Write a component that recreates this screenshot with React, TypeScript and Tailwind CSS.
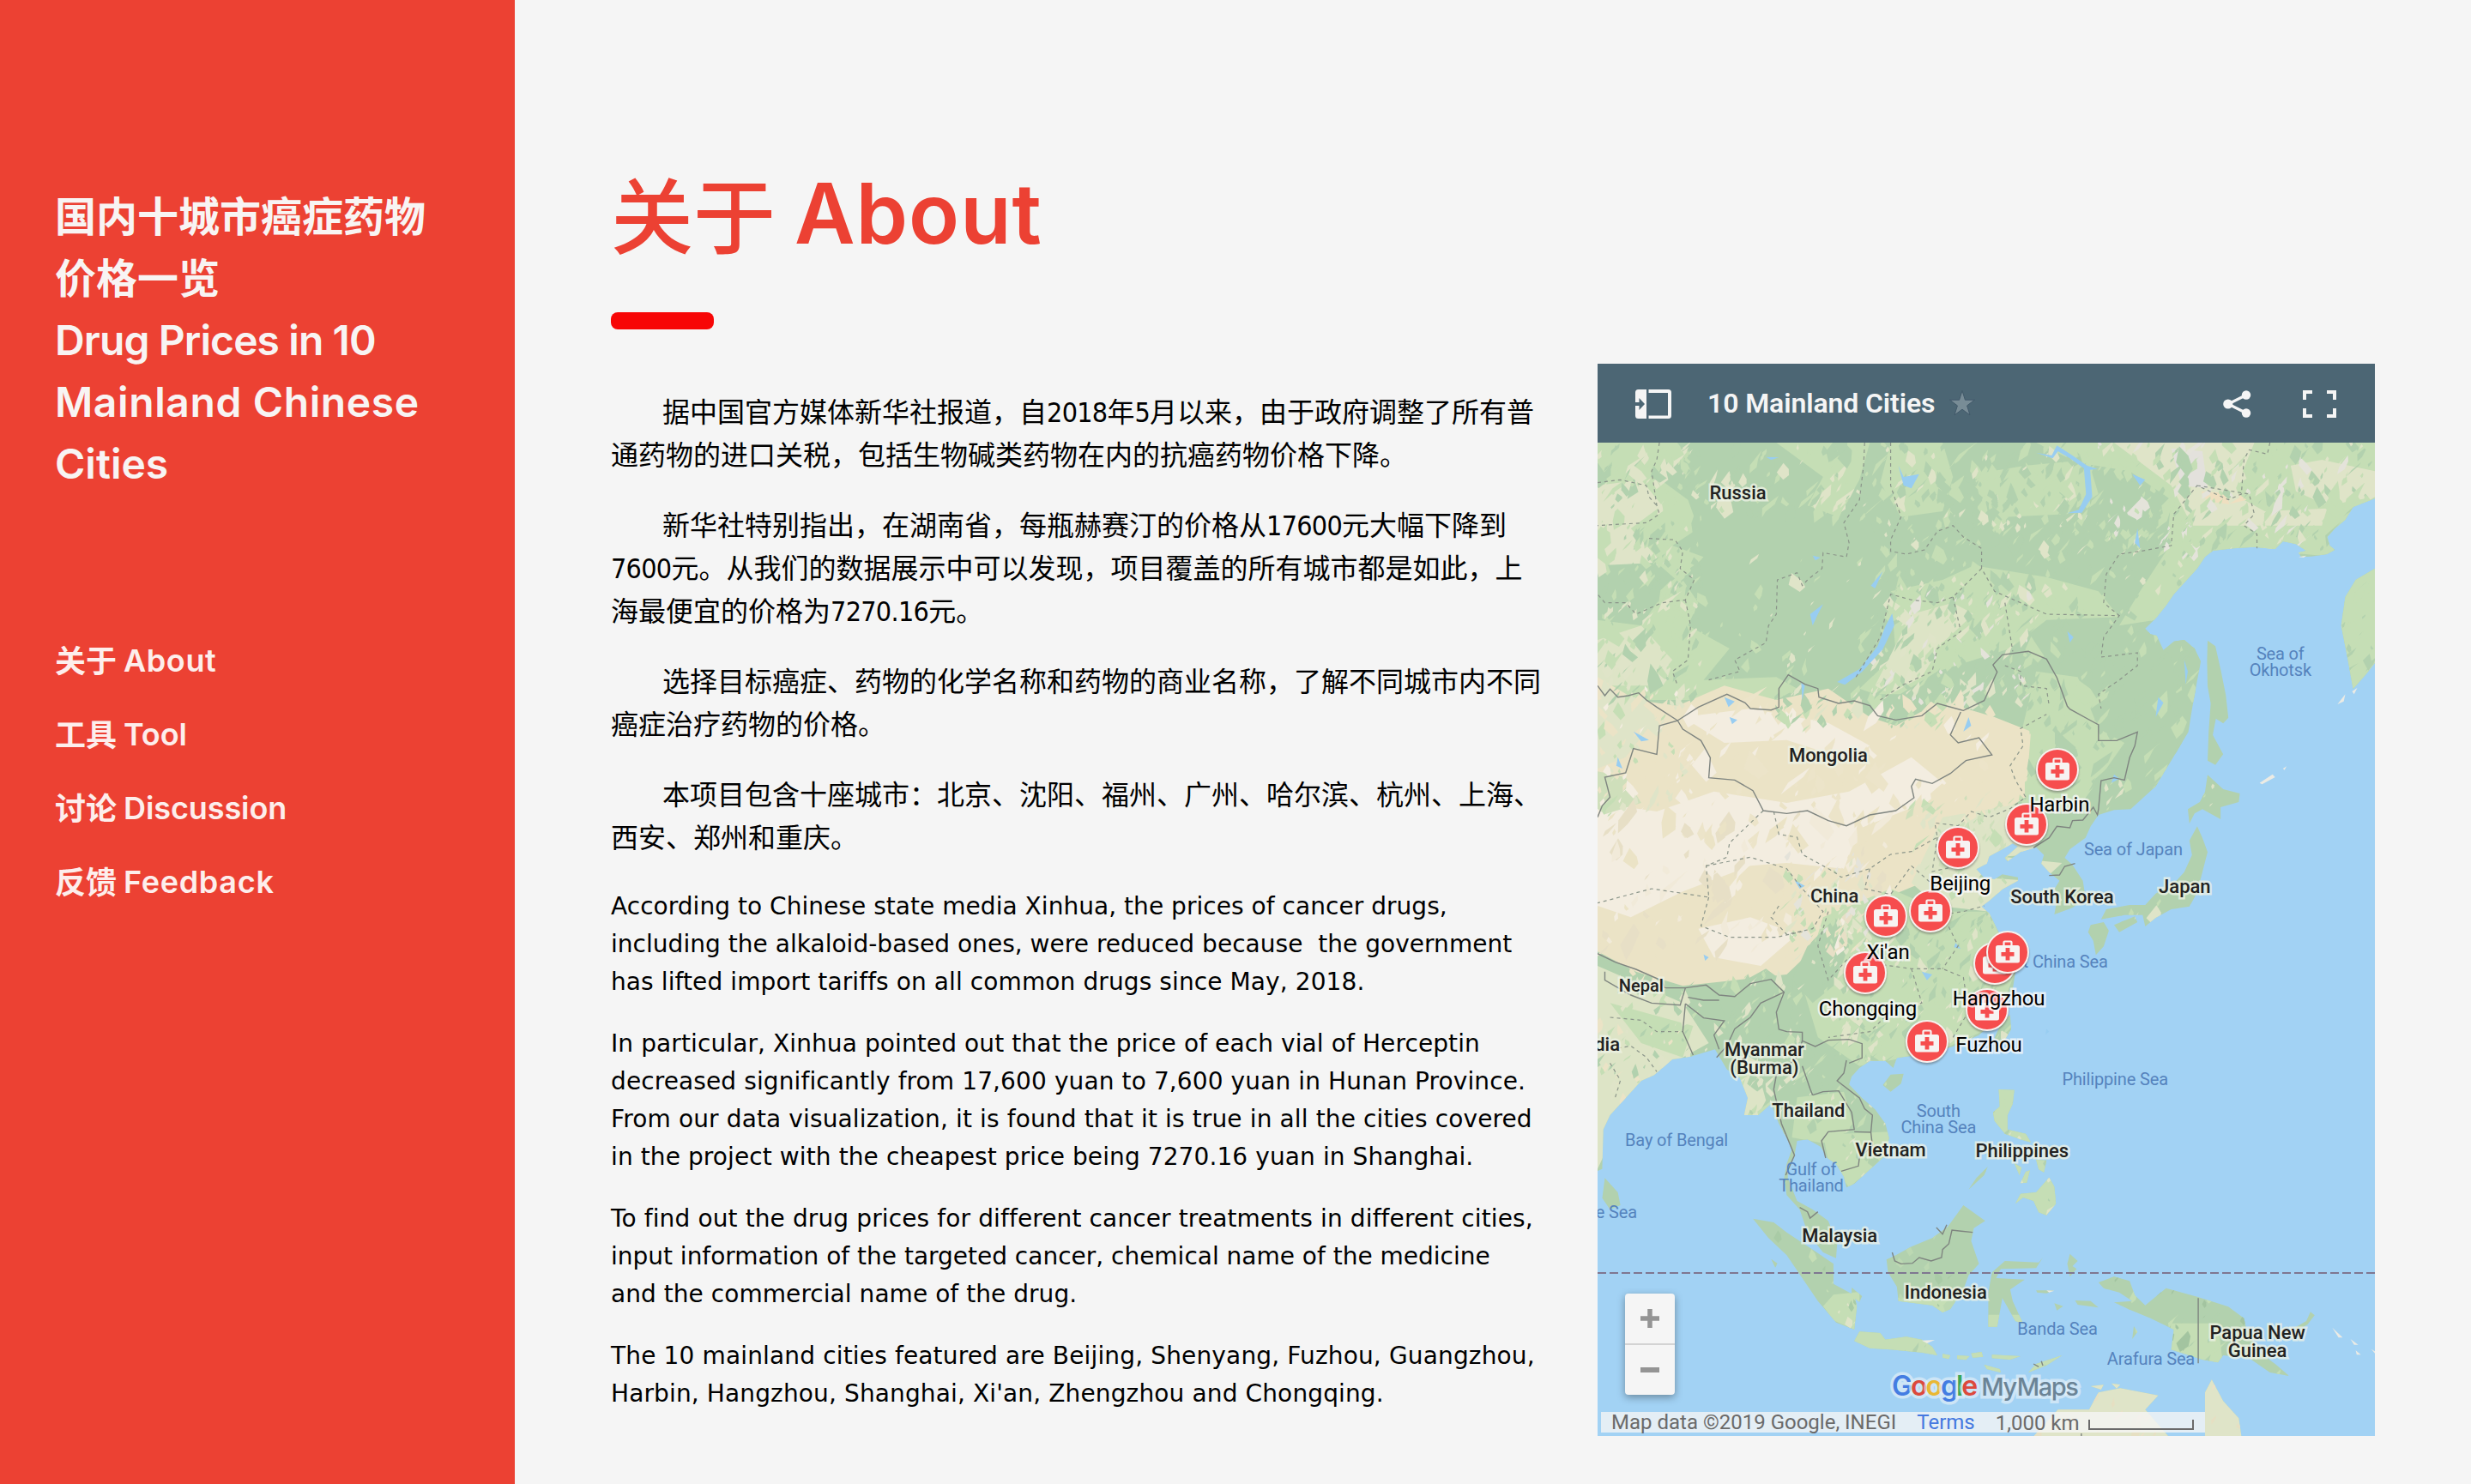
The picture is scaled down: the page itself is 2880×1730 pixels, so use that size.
import React from 'react';

/* ------------------------------------------------------------------ */
/* Sidebar                                                             */
/* ------------------------------------------------------------------ */

const NAV: { zh: string; en: string; tracking: string }[] = [
  { zh: '关于', en: 'About', tracking: 'tracking-[0.6px]' },
  { zh: '工具', en: 'Tool', tracking: 'tracking-[-0.1px]' },
  { zh: '讨论', en: 'Discussion', tracking: 'tracking-[-0.1px]' },
  { zh: '反馈', en: 'Feedback', tracking: 'tracking-[0.7px]' },
];

function Sidebar() {
  return (
    <aside className="flex h-[1730px] w-[600px] shrink-0 flex-col bg-[#ec4133] pl-16 pt-[213px] font-['Inter','Noto_Sans_CJK_SC',sans-serif] font-semibold text-[#f8f4f3]">
      <h1 className="flex flex-col whitespace-nowrap text-[48px] leading-[72px]">
        <span className="font-['Noto_Sans_CJK_SC',sans-serif] font-bold">国内十城市癌症药物</span>
        <span className="mb-1 font-['Noto_Sans_CJK_SC',sans-serif] font-bold">价格一览</span>
        <span className="tracking-[-0.9px]">Drug Prices in 10</span>
        <span className="tracking-[0.6px]">Mainland Chinese</span>
        <span className="tracking-[0px]">Cities</span>
      </h1>
      <nav className="mt-[150px] flex flex-col text-[36px] leading-[86px] text-[#fdeeec]">
        {NAV.map((n) => (
          <a key={n.en} className="flex h-[86px] gap-[8px] whitespace-nowrap">
            <span className="font-['Noto_Sans_CJK_SC',sans-serif] font-bold leading-[82px]">{n.zh}</span>
            <span className={n.tracking}>{n.en}</span>
          </a>
        ))}
      </nav>
    </aside>
  );
}

/* ------------------------------------------------------------------ */
/* Article                                                             */
/* ------------------------------------------------------------------ */

const ZH: string[][] = [
  ['据中国官方媒体新华社报道，自2018年5月以来，由于政府调整了所有普', '通药物的进口关税，包括生物碱类药物在内的抗癌药物价格下降。'],
  ['新华社特别指出，在湖南省，每瓶赫赛汀的价格从17600元大幅下降到', '7600元。从我们的数据展示中可以发现，项目覆盖的所有城市都是如此，上', '海最便宜的价格为7270.16元。'],
  ['选择目标癌症、药物的化学名称和药物的商业名称，了解不同城市内不同', '癌症治疗药物的价格。'],
  ['本项目包含十座城市：北京、沈阳、福州、广州、哈尔滨、杭州、上海、', '西安、郑州和重庆。'],
];

const EN: [string, string][][] = [
  [
    ['According to Chinese state media Xinhua, the prices of cancer drugs,', 'tracking-[0.04px]'],
    ['including the alkaloid-based ones, were reduced because \u00a0the government', 'tracking-[0.03px]'],
    ['has lifted import tariffs on all common drugs since May, 2018.', 'tracking-[0.1px]'],
  ],
  [
    ['In particular, Xinhua pointed out that the price of each vial of Herceptin', 'tracking-[0.1px]'],
    ['decreased significantly from 17,600 yuan to 7,600 yuan in Hunan Province.', 'tracking-[0.11px]'],
    ['From our data visualization, it is found that it is true in all the cities covered', 'tracking-[0.13px]'],
    ['in the project with the cheapest price being 7270.16 yuan in Shanghai.', 'tracking-[0.1px]'],
  ],
  [
    ['To find out the drug prices for different cancer treatments in different cities,', 'tracking-[0.12px]'],
    ['input information of the targeted cancer, chemical name of the medicine', 'tracking-[-0.01px]'],
    ['and the commercial name of the drug.', 'tracking-[0.05px]'],
  ],
  [
    ['The 10 mainland cities featured are Beijing, Shenyang, Fuzhou, Guangzhou,', 'tracking-[0.15px]'],
    ["Harbin, Hangzhou, Shanghai, Xi'an, Zhengzhou and Chongqing.", 'tracking-[0.13px]'],
  ],
];

function ZhLine({ text }: { text: string }) {
  return (
    <span className="block h-[50px]">
      {text.split(/([0-9.]+)/).map((part, i) =>
        /^[0-9.]+$/.test(part) ? (
          <span key={i} className="font-['DejaVu_Sans_Condensed','DejaVu_Sans',sans-serif] tracking-[-0.7px]">
            {part}
          </span>
        ) : (
          <span key={i}>{part}</span>
        ),
      )}
    </span>
  );
}

function Article() {
  return (
    <article className="flex w-[1150px] flex-col gap-8 whitespace-nowrap pt-[29px] text-black">
      {ZH.map((p, i) => (
        <p key={i} className="indent-[60px] font-['Noto_Sans_CJK_SC',sans-serif] text-[32px] leading-[50px]">
          {p.map((l, j) => (
            <span key={l} className={j === 0 ? 'block' : 'block indent-0'}>
              <ZhLine text={l} />
            </span>
          ))}
        </p>
      ))}
      <div className="mt-1 flex flex-col gap-7 font-['DejaVu_Sans',sans-serif] text-[28px] leading-[44px]">
        {EN.map((p, i) => (
          <p key={i}>
            {p.map(([l, tracking]) => (
              <span key={l} className={`block ${tracking}`}>
                {l}
              </span>
            ))}
          </p>
        ))}
      </div>
    </article>
  );
}

/* ------------------------------------------------------------------ */
/* Map. The drawing grid runs x 36..1532 and y 0..3474 and is stretched */
/* over the 906 x 1158 canvas.                                         */
/* ------------------------------------------------------------------ */

const LAND: string[] = [
  'M36 0H1532V195L1490 225 1475 270 1455 300 1440 330 1445 360 1455 375 1440 390 1410 398 1390 400 1385 385 1400 378 1380 355 1355 345 1340 372 1300 365 1260 370 1220 378 1205 400 1190 440 1165 490 1145 530 1130 570 1110 615 1090 650 1100 670 1112 675 1125 725 1145 695 1165 690 1185 720 1197 765 1190 832 1180 932 1173 1012 1140 1112 1110 1202 1062 1282 1030 1285 1000 1302 985 1342 975 1382 945 1422 935 1452 950 1477 970 1532 975 1592 950 1627 915 1650 920 1602 915 1562 925 1532 905 1502 890 1472 895 1442 880 1415 850 1432 825 1465 820 1452 845 1412 835 1402 810 1427 790 1447 785 1472 765 1492 780 1522 800 1527 815 1510 845 1520 845 1532 815 1562 790 1602 775 1622 790 1647 808 1712 830 1772 820 1822 840 1852 835 1912 820 1972 800 2022 770 2072 720 2112 690 2127 650 2142 612 2152 605 2187 590 2162 560 2162 540 2187 525 2217 520 2245 545 2292 570 2332 590 2382 597 2432 590 2492 560 2542 530 2592 515 2605 510 2567 495 2522 478 2502 465 2462 440 2437 420 2442 415 2492 402 2532 402 2572 420 2652 450 2682 480 2722 497 2802 495 2852 470 2832 440 2762 425 2682 400 2632 395 2572 400 2522 410 2472 400 2432 385 2382 370 2312 345 2352 318 2352 325 2292 310 2222 285 2192 262 2122 215 2147 180 2157 145 2212 120 2232 90 2292 60 2352 47 2402 45 2540 36 2547Z',
  'M1210 692L1225 712 1235 792 1245 882 1250 962 1240 982 1226 965 1220 1022 1240 1090 1225 1127 1210 1112 1212 1012 1216 912 1210 852 1209 762Z',
  'M1532 440L1495 480 1475 540 1467 640 1480 760 1490 862 1515 810 1532 770Z',
  'M1210 1162L1240 1212 1272 1227 1270 1257 1235 1275 1235 1317 1200 1282 1185 1297 1175 1332 1172 1282 1195 1257 1205 1222Z',
  'M1190 1342L1200 1382 1210 1432 1200 1502 1190 1572 1175 1622 1140 1632 1110 1662 1090 1692 1085 1652 1050 1652 1005 1667 1015 1632 1060 1617 1090 1617 1110 1577 1150 1532 1165 1502 1180 1442 1175 1392Z',
  'M985 1687L1010 1677 1020 1707 1010 1762 995 1792 990 1742 980 1712Z',
  'M1030 1687L1070 1657 1075 1677 1040 1712Z',
  'M830 2002L832 2052 812 2112 800 2082 815 2022Z',
  'M600 2210L625 2207 620 2242 600 2270 585 2247Z',
  'M50 2572L75 2622 80 2667 60 2682 45 2642Z',
  'M808 2262L838 2264 835 2312 825 2352 825 2402 860 2417 870 2447 850 2437 820 2417 800 2372 797 2342 810 2322Z',
  'M905 2570L915 2602 918 2662 900 2702 885 2692 875 2652 855 2640 840 2662 850 2627 880 2622Z',
  'M838 2520L852 2535 848 2562ZM860 2550L868 2545 862 2588 850 2590ZM880 2508L900 2510 895 2552 885 2542Z',
  'M787 2532L780 2562 750 2612 765 2572Z',
  'M335 2714L375 2727 400 2762 450 2822 490 2872 490 2942 530 2982 535 3022 530 3102 495 3077 460 3002 430 2922 400 2842 365 2782Z',
  'M740 2667L782 2722 760 2747 755 2792 770 2872 750 2912 740 2962 715 3030 700 3042 680 3017 615 3002 612 2952 595 2902 592 2857 610 2842 640 2812 680 2782 710 2742Z',
  'M540 3109L580 3114 590 3137 630 3127 660 3137 680 3162 690 3192 660 3182 600 3172 560 3167 530 3142Z',
  'M700 3187L715 3192 712 3205 700 3200ZM728 3192L752 3195 745 3208 728 3205ZM755 3185L775 3180 778 3197 758 3200ZM795 3190L850 3195 830 3207 795 3202ZM780 3225L810 3240 812 3252 785 3240Z',
  'M820 2862L885 2867 893 2850 880 2887 812 2890 803 2922 858 2927 830 2962 835 3002 855 3082 840 3072 815 2992 805 3092 788 3092 788 2972 795 2902Z',
  'M945 2837L960 2862 950 2880 958 2890 945 2917 940 2872ZM955 3000L985 3002 1000 3025 960 3015ZM915 3010L932 3020 920 3035ZM880 2965L915 2965 900 2975 882 2972ZM1068 3090L1075 3110 1065 3135ZM525 2955L545 2985 540 3005 525 2985ZM370 2855L382 2870 378 2885Z',
  'M1000 2937L1030 2917 1060 2932 1070 2982 1090 3017 1130 2957 1190 2987 1250 3022 1280 3062 1285 3102 1310 3182 1340 3222 1367 3264 1330 3252 1290 3202 1240 3192 1230 3217 1200 3207 1140 3172 1145 3102 1100 3062 1060 3032 1030 3007 1065 3002 1040 2972 1010 2957Z',
  'M1378 3095L1400 3072 1408 3040 1416 3052 1402 3085 1382 3105Z',
  'M865 3252L880 3222 930 3192 900 3227Z',
  'M876 3474L922 3382 982 3382 1000 3322 1042 3307 1115 3332 1090 3382 1134 3474ZM985 3300L1010 3295 1005 3312ZM1025 3290L1042 3295 1035 3308Z',
  'M1205 3474V3322L1218 3277 1240 3352 1270 3412 1275 3474Z',
];

const ZONES: { d: string; c: string }[] = [
  { d: 'M36 0H180L150 120 210 200 230 300 180 360 240 400 200 480 230 560 210 640 290 720 240 830 380 820 420 860 380 900 36 900Z', c: '#c5deb5' },
  { d: 'M36 150L120 130 160 220 100 300 160 420 60 430 36 300Z', c: '#dfe4c8' },
  { d: 'M36 430L150 420 200 500 150 560 120 640 36 620Z', c: '#b2d1ae' },
  { d: 'M36 690L120 640 180 760 140 850 36 850Z', c: '#dde4c6' },
  { d: 'M380 0H560L540 130 500 260 440 220 470 120Z', c: '#c5deb5' },
  { d: 'M600 0H700L720 120 700 240 620 260 580 140Z', c: '#c5deb5' },
  { d: 'M760 110L860 80 980 60 1000 180 940 250 820 260 770 180Z', c: '#c5deb5' },
  { d: 'M880 0H1532V200L1450 330 1455 400 1340 380 1220 380 1170 500 1110 620 1040 640 1080 520 1130 380 1140 200 1060 100 960 70Z', c: '#c5deb5' },
  { d: 'M1030 0H1300L1260 180 1320 240 1440 230 1430 290 1310 290 1180 290 1140 150Z', c: '#dfe4c8' },
  { d: 'M1140 20L1200 30 1210 160 1160 150Z', c: '#e3e1dc' },
  { d: 'M1195 170L1270 180 1285 200 1250 215 1210 205Z', c: '#efdfc0' },
  { d: 'M1370 80L1430 60 1532 100V190L1440 220 1380 170Z', c: '#dfe4c8' },
  { d: 'M600 520L700 480 760 430 900 470 1000 520 1040 610 900 620 830 720 690 800 600 900 540 860 610 740Z', c: '#c5deb5' },
  { d: 'M640 600L720 560 760 600 700 700 660 820 600 880 570 850Z', c: '#dde4c6' },
  { d: 'M880 800L960 820 1000 1000 1050 1050 1000 1180 960 1280 870 1300 840 1100Z', c: '#c5deb5' },
  { d: 'M36 820L110 900 190 920 280 850 380 900 480 860 560 960 690 900 800 960 870 1010 860 1240 780 1330 720 1390 660 1540 580 1600 500 1680 440 1790 400 1860 300 1880 200 1900 110 1850 36 1780Z', c: '#ebe3c6' },
  { d: 'M200 960L330 930 480 980 560 1060 520 1110 400 1040 280 1050Z', c: '#f3ede0' },
  { d: 'M36 1260L150 1290 260 1220 400 1260 520 1220 640 1100 700 1190 650 1270 540 1350 510 1490 400 1470 330 1480 200 1570 100 1660 36 1620Z', c: '#f3ede0' },
  { d: 'M230 1700L330 1660 420 1720 350 1830 260 1800Z', c: '#f3ede0' },
  { d: 'M36 900L100 880 150 960 90 1100 36 1140Z', c: '#dfe4c8' },
  { d: 'M36 1150L90 1170 120 1260 50 1300 36 1280Z', c: '#cfdfbb' },
  { d: 'M560 880L690 880 660 940 610 990 560 960Z', c: '#b2d1ae' },
  { d: 'M700 1310L860 1260 880 1440 800 1450 770 1520 850 1530 790 1640 690 1620 640 1540Z', c: '#dde4c6' },
  { d: 'M470 1660L600 1560 700 1640 790 1640 840 1850 800 2040 690 2130 540 2180 460 2080 430 1900Z', c: '#c5deb5' },
  { d: 'M440 1760L500 1650 520 1760 490 1900 450 1960 410 1880Z', c: '#b2d1ae' },
  { d: 'M280 1920L360 1840 420 1920 400 2060 420 2200 390 2250 330 2220 280 2120Z', c: '#b2d1ae' },
  { d: 'M36 1830L200 1960 250 2100 200 2150 100 2290 36 2540Z', c: '#dde4c6' },
  { d: 'M60 1960L220 2040 200 2150 120 2100Z', c: '#c5deb5' },
  { d: 'M310 2210L345 2200 360 2300 345 2352 318 2352Z', c: '#dde4c6' },
  { d: 'M420 2290L510 2270 530 2400 470 2450 410 2430Z', c: '#c5deb5' },
  { d: 'M470 2420L600 2410 590 2500 520 2605 480 2510Z', c: '#c5deb5' },
  { d: 'M490 2980L540 2970 540 3110 490 3070 470 3020Z', c: '#c5deb5' },
  { d: 'M600 2990L735 2990 700 3050 620 3020Z', c: '#c5deb5' },
  { d: 'M530 3100H700V3210H530ZM780 3050H860V3110H780ZM700 3170H940V3260H700Z', c: '#c5deb5' },
  { d: 'M790 2250H930V2720H790Z', c: '#c5deb5' },
  { d: 'M1140 3080L1230 3080 1240 3230 1130 3200Z', c: '#c5deb5' },
  { d: 'M860 3270H1290V3474H860Z', c: '#dfe4c8' },
  { d: 'M1467 440H1532V780L1490 862 1467 700Z', c: '#c5deb5' },
  { d: 'M820 1450L930 1470 900 1520 930 1600 900 1650Z', c: '#dde4c6' },
];

const BORDERS: string[] = [
  'M36 850L50 885 60 862 75 890 95 885 115 875 130 900 150 925 190 972',
  'M190 972L230 925 285 880 320 910 330 930 370 935 385 925 385 860 403 812 435 845 460 860 462 890 500 912 530 903 560 920 575 955 610 970 660 955 690 912 740 937 780 902 795 842 805 802 797 777 815 742 865 730 900 757 920 822 940 922 945 932 985 972 1000 987 1000 1042 1035 1042 1075 1012 1070 1060 1060 1102 1050 1180 1030 1172 1005 1182 1000 1282 998 1302 990 1275 970 1320 950 1322 945 1347 920 1342 905 1382 875 1417',
  'M735 942L715 1022 730 1050 770 1032 795 1092 745 1112 715 1157 680 1192 648 1177 640 1202 645 1242 610 1287 560 1302 515 1340 480 1322 440 1287 400 1297 355 1287 335 1217 300 1180 250 1172 253 1102 235 1042 200 1002 190 972 155 990 150 1090 105 1070 90 1155 50 1170 60 1240 45 1270 36 1310',
  'M36 1787L70 1817 110 1842 160 1882 165 1907 205 1907 245 1897 270 1932 300 1937 330 1892 370 1877 395 1922 380 1992 385 2052 400 2060 430 2062 430 2092 455 2112 480 2090 520 2087 545 2102 545 2152 520 2170',
  'M50 1850L50 1880 100 1932 140 1960 195 1967 205 1907M205 1962L240 2012 280 2022 260 2072 270 2122M205 1962L200 2060 220 2142M210 1940L240 1950 270 1950M395 1922L350 1960 330 2010 300 2050 285 2110 265 2150',
  'M430 2092L420 2150 380 2212 375 2262 390 2382 415 2492 398 2562M450 2282L470 2270 500 2267 525 2342 530 2402 480 2410 467 2442 475 2502M430 2180L445 2260 450 2282M515 2160L510 2205 497 2232 540 2292 550 2330 565 2352 562 2412 530 2410M562 2412L565 2460 540 2500 538 2530 505 2548',
  'M425 2675L440 2690 445 2712 460 2690',
  'M603 2832L608 2862 620 2872 642 2870 655 2850 678 2862 698 2850 700 2822 712 2802 718 2754 758 2762M688 2745L700 2768 708 2735',
  'M1192 2992V3220M875 3222L885 3232M890 3212L893 3228M967 3465V3474',
  'M905 1514L925 1512 935 1482 955 1472',
];

const PROVINCES: string[] = [
  'M155 0L150 60 140 100 150 220 155 250 130 280 36 290M36 140L80 130 130 150 135 190 150 220',
  'M550 0L548 80 540 200 510 280 520 350 515 400 470 385 468 440 440 480 430 500 420 455 382 480 380 600 365 640 360 700 300 760 310 800 250 830',
  'M600 0L600 150 620 260 600 340 600 380 630 390 665 375 675 350 690 310 720 290 740 330 775 370 775 440 800 520 850 560 900 600 1040 605 1010 680 1005 750 1075 735 1075 780 1040 830 1000 880 1005 930',
  'M135 335L185 340 200 380 195 440 222 480 205 550 160 560 110 600 90 560 50 560 36 530M205 550L215 640 210 760 180 800 190 850',
  'M1330 0L1325 40 1290 25 1280 60 1275 180 1250 200 1190 150 1145 250 1140 360 1080 380 1040 390 1015 460 1010 560 1040 605M1190 150L1290 180 1300 250 1280 290 1305 320 1305 370',
  'M775 440L720 540 690 560 640 550 600 530 580 680 530 830M820 560L835 730M720 540L735 660 690 720 680 800 620 850 580 900M820 780L850 800 850 850 900 860 905 920',
  'M355 1287L290 1400 285 1450 245 1480 250 1590 140 1560 36 1610M375 1290L385 1370 420 1380 430 1440 490 1500 505 1520 560 1490 600 1440 640 1430 690 1380 685 1330 730 1340 755 1290 790 1310 830 1280 860 1240 840 1180 830 1130 855 1060 850 1000 900 950',
  'M245 1480L330 1450 400 1490 430 1560 470 1640 450 1700 400 1720 370 1660 385 1620M250 1590L235 1690 290 1730 380 1730 430 1710',
  'M560 1490L550 1560 600 1580 640 1480M640 1480L690 1560 660 1630 700 1650 740 1640 780 1620M480 1640L460 1760 480 1880 520 1800 560 1820 640 1840 700 1840 740 1870 750 1990 720 2080M640 1840L660 1960 600 1990 560 2060 480 2080M700 1650L730 1760 700 1840M690 1380L680 1500 730 1480',
  'M60 2010L120 2020 150 2060 200 2060M36 2130L100 2110 130 2150 150 2200M60 2170L80 2230 70 2290',
];

const WATER: string[] = [
  'M603 597L607 640 585 722 545 802 512 847 497 837 540 792 575 712 590 642Z',
  'M615 80L625 120 655 110 640 160 625 150ZM880 35L910 45 920 10 950 45 978 80 998 92 984 95 988 190 968 245 940 247 962 235 976 180 972 90 945 55 922 30 912 55ZM1065 110L1090 130 1080 150ZM360 50L385 52 370 60Z',
  'M470 565L460 600 450 640 445 600ZM585 450L570 510 562 500ZM450 395L465 402 455 412ZM940 660L952 680 945 700ZM1075 300L1080 370 1070 350Z',
  'M280 890L300 905 288 925ZM428 840L435 850 430 900ZM75 1100L84 1140 72 1130ZM105 1010L135 1040 120 1045ZM415 1530L435 1550 425 1560ZM750 960L755 990 740 1010ZM290 960L305 970 295 985ZM1165 760L1172 800 1168 845ZM1115 890L1125 910 1110 960Z',
  'M240 1790L250 1800 243 1812ZM660 1850L680 1860 670 1880ZM725 1750L735 1770 722 1765ZM900 2050L905 2060 898 2070ZM1030 1160L1040 1175 1025 1190Z',
];

const ISLETS: string[] = [
  'M1460 915L1475 880 1472 905ZM1310 1190L1335 1160 1340 1170 1315 1195ZM1355 1140L1362 1132 1358 1145ZM1283 1215L1290 1208ZM1488 870L1498 858 1492 880Z',
  'M1450 3095L1470 3130 1462 3130ZM1485 3135L1500 3155 1492 3155ZM1495 3175L1505 3190 1497 3190ZM1525 3170L1532 3178V3185ZM660 3140L685 3138 670 3150ZM900 2965L915 2966 905 2972ZM1385 400L1400 395 1395 402Z',
];

function makeRandom(seed: number) {
  let s = seed;
  return () => {
    s = (s * 1664525 + 1013904223) % 4294967296;
    return s / 4294967296;
  };
}

/* x, y, width, height, count, shard size, colours */
type Patch = [number, number, number, number, number, number, string[]];
const G1 = '#b2d1ae';
const G2 = '#c5deb5';
const G3 = '#dfe4c8';
const GR = '#e4e3da';
const PATCHES: Patch[] = [
  [36, 0, 200, 900, 240, 26, [G1, G1, G2, G2, G3]],
  [200, 0, 340, 250, 90, 22, [G1, G1, G2, G2, G3]],
  [200, 400, 380, 480, 40, 16, [G2, G2, G3]],
  [540, 0, 420, 300, 170, 24, [G1, G1, G1, G2, G2, G3]],
  [960, 0, 570, 400, 300, 24, [G1, G1, G2, G2, G2, G3, GR]],
  [580, 280, 600, 340, 170, 20, [G1, G1, G2, G2, G3]],
  [560, 500, 320, 420, 240, 22, [G1, G1, G2, G2, G3, GR]],
  [860, 600, 330, 600, 150, 28, [G1, G1, G1, G2]],
  [1467, 440, 65, 420, 30, 20, [G1, G2]],
  [36, 860, 180, 460, 90, 22, [G2, G3, '#ebe3c6', '#f3ede0']],
  [200, 900, 600, 500, 110, 28, ['#ebe3c6', '#f3ede0', '#ece4c9']],
  [380, 860, 330, 140, 60, 20, [G1, G2, G3]],
  [36, 1300, 560, 500, 120, 30, ['#ebe3c6', '#f3ede0', '#f1ead9', '#e7dfc6']],
  [400, 1440, 160, 380, 90, 18, [G2, G3, GR, '#ebe3c6']],
  [640, 1240, 240, 420, 120, 20, [G2, G3, '#cfdfbb']],
  [470, 1620, 370, 560, 280, 20, [G1, G1, G2, G2, G3]],
  [260, 1850, 180, 400, 100, 18, [G1, G1, G2, G3]],
  [36, 1850, 230, 480, 110, 18, [G1, G2, G3, '#ebe3c6']],
  [300, 2150, 300, 450, 110, 18, [G1, G2, G3]],
  [330, 2700, 220, 400, 16, 14, [G2, '#a9cba6']],
  [590, 2700, 190, 340, 16, 16, ['#bcd8b2', '#a9cba6']],
  [500, 2960, 60, 150, 12, 14, [G2, G3]],
  [530, 3100, 420, 170, 60, 16, [G1, G2, '#ecebdf']],
  [780, 2250, 150, 470, 60, 14, [G1, G2, G3]],
  [1000, 2910, 380, 350, 70, 18, [G1, G2, '#a3c4a0']],
  [990, 1160, 290, 640, 80, 18, [G2, G2, G1, G3]],
  [860, 3290, 420, 190, 40, 24, ['#e6dfc2', G3, '#ecdfc6']],
];

function buildShards() {
  const rnd = makeRandom(20191);
  const out: { d: string; c: string }[] = [];
  for (const [x, y, w, h, n, size, colors] of PATCHES) {
    for (let i = 0; i < n; i++) {
      const cx = x + rnd() * w;
      const cy = y + rnd() * h;
      const s = size * (0.25 + rnd() * rnd() * 1.3);
      const tilt = (rnd() - 0.3) * s * 1.3;
      const j = () => (rnd() - 0.5) * s * 0.5;
      const px = (v: number) => v.toFixed(1);
      out.push({
        c: colors[Math.floor(rnd() * colors.length)],
        d: `M${px(cx + tilt)} ${px(cy - s * 1.5)}L${px(cx + s * 0.35 + j())} ${px(cy - s * 0.5 + j())} ${px(cx + s * 0.5 - tilt)} ${px(cy + s * 0.7)} ${px(cx - tilt + j())} ${px(cy + s * 1.5)} ${px(cx - s * 0.45 + j())} ${px(cy + s * 0.2 + j())}Z`,
      });
    }
  }
  return out;
}
const SHARDS = buildShards();

function Terrain() {
  return (
    <svg className="absolute inset-0 h-full w-full" viewBox="36 0 1496 3474" preserveAspectRatio="none">
      <defs>
        <clipPath id="land">
          {LAND.map((d) => (
            <path key={d} d={d} />
          ))}
        </clipPath>
      </defs>
      <rect x="36" y="0" width="1496" height="3474" fill="#a2d2f4" />
      <g clipPath="url(#land)">
        <rect x="36" y="0" width="1496" height="3474" fill="#b2d1ae" />
        {ZONES.map((z) => (
          <path key={z.d} d={z.d} fill={z.c} />
        ))}
        {SHARDS.map((s, i) => (
          <path key={i} d={s.d} fill={s.c} />
        ))}
      </g>
      {WATER.map((d) => (
        <path key={d} d={d} fill="#98cdf1" />
      ))}
      {ISLETS.map((d) => (
        <path key={d} d={d} fill="#ecebe4" />
      ))}
      <g fill="none" stroke="#8b958a" strokeWidth="1.2" strokeDasharray="4 4">
        {PROVINCES.map((d) => (
          <path key={d} d={d} vectorEffect="non-scaling-stroke" />
        ))}
      </g>
      <g fill="none" stroke="#7f8580" strokeWidth="1.4">
        {BORDERS.map((d) => (
          <path key={d} d={d} vectorEffect="non-scaling-stroke" />
        ))}
      </g>
      <path d="M36 2904H1532" stroke="#7f7791" strokeWidth="2" strokeDasharray="10 4" vectorEffect="non-scaling-stroke" />
    </svg>
  );
}

type Place = { x: number; y: number; lines: string[]; kind: 'country' | 'sea' | 'city' | 'small'; anchor?: 'right' };

const UNDER: Place[] = [
  { x: 306, y: 173, lines: ['Russia'], kind: 'country' },
  { x: 1350, y: 767, lines: ['Sea of', 'Okhotsk'], kind: 'sea' },
  { x: 480, y: 1091, lines: ['Mongolia'], kind: 'country' },
  { x: 1067, y: 1421, lines: ['Sea of Japan'], kind: 'sea' },
  { x: 1166, y: 1551, lines: ['Japan'], kind: 'country' },
  { x: 930, y: 1587, lines: ['South Korea'], kind: 'country' },
  { x: 492, y: 1585, lines: ['China'], kind: 'country' },
  { x: 1018, y: 1814, lines: ['East China Sea'], kind: 'sea', anchor: 'right' },
  { x: 120, y: 1899, lines: ['Nepal'], kind: 'small' },
  { x: 79, y: 2102, lines: ['India'], kind: 'country', anchor: 'right' },
  { x: 357, y: 2155, lines: ['Myanmar', '(Burma)'], kind: 'country' },
  { x: 1032, y: 2226, lines: ['Philippine Sea'], kind: 'sea' },
  { x: 442, y: 2333, lines: ['Thailand'], kind: 'country' },
  { x: 692, y: 2368, lines: ['South', 'China Sea'], kind: 'sea' },
  { x: 188, y: 2439, lines: ['Bay of Bengal'], kind: 'sea' },
  { x: 600, y: 2472, lines: ['Vietnam'], kind: 'country' },
  { x: 853, y: 2474, lines: ['Philippines'], kind: 'country' },
  { x: 447, y: 2571, lines: ['Gulf of', 'Thailand'], kind: 'sea' },
  { x: 112, y: 2691, lines: ['Laccadive Sea'], kind: 'sea', anchor: 'right' },
  { x: 502, y: 2772, lines: ['Malaysia'], kind: 'country' },
  { x: 706, y: 2970, lines: ['Indonesia'], kind: 'country' },
  { x: 921, y: 3100, lines: ['Banda Sea'], kind: 'sea' },
  { x: 1101, y: 3205, lines: ['Arafura Sea'], kind: 'sea' },
  { x: 1306, y: 3143, lines: ['Papua New', 'Guinea'], kind: 'country' },
];

const CITIES: Place[] = [
  { x: 925, y: 1266, lines: ['Harbin'], kind: 'city' },
  { x: 734, y: 1542, lines: ['Beijing'], kind: 'city' },
  { x: 595, y: 1781, lines: ["Xi'an"], kind: 'city' },
  { x: 556, y: 1979, lines: ['Chongqing'], kind: 'city' },
  { x: 808, y: 1944, lines: ['Hangzhou'], kind: 'city' },
  { x: 789, y: 2105, lines: ['Fuzhou'], kind: 'city' },
];

const MARKERS: [number, number][] = [
  [921, 1142], [861, 1334], [729, 1417], [590, 1657], [676, 1639],
  [800, 1822], [825, 1782], [551, 1854], [785, 1982], [670, 2094],
];

const KIND = {
  country: 'text-[22px] leading-[21px] font-medium text-[#222] [-webkit-text-stroke:5px_rgba(238,243,230,0.75)] [paint-order:stroke_fill]',
  small: 'text-[20px] leading-[21px] font-medium text-[#222] [-webkit-text-stroke:5px_rgba(238,243,230,0.75)] [paint-order:stroke_fill]',
  sea: 'text-[20px] leading-[19px] tracking-[-0.15px] text-[#5583bd]',
  city: 'text-[24px] leading-[28px] text-black tracking-[-0.15px] [-webkit-text-stroke:5px_rgba(250,250,250,0.75)] [paint-order:stroke_fill]',
};

const at = (x: number, y: number) => ({ left: `${((x - 36) / 1496) * 100}%`, top: `${(y / 3474) * 100}%` });

function Label({ p }: { p: Place }) {
  const shift = p.anchor === 'right' ? '-translate-x-full -translate-y-1/2' : '-translate-x-1/2 -translate-y-1/2';
  return (
    <div className={`absolute whitespace-nowrap text-center ${shift} ${KIND[p.kind]}`} style={at(p.x, p.y)}>
      {p.lines.map((l) => (
        <div key={l}>{l}</div>
      ))}
    </div>
  );
}

function Marker({ x, y }: { x: number; y: number }) {
  return (
    <svg
      className="absolute size-[50px] -translate-x-1/2 -translate-y-1/2 drop-shadow-[0_2px_1px_rgba(60,60,60,0.4)]"
      style={at(x, y)}
      viewBox="0 0 50 50"
    >
      <circle cx="25" cy="25" r="24" fill="#f64d4e" stroke="#f7f1ee" strokeWidth="2" />
      <path d="M20.5 18V13.5Q20.5 12.5 21.5 12.5H28.5Q29.5 12.5 29.5 13.5V18" fill="none" stroke="#f7f3f2" strokeWidth="2.2" />
      <rect x="11" y="17" width="28" height="20.5" rx="2.5" fill="#f7f3f2" />
      <path d="M25 20V34.6M17.5 27.3H32.5" stroke="#f64d4e" strokeWidth="4.8" />
    </svg>
  );
}

function MapHeader() {
  return (
    <header className="flex h-[92px] items-center bg-[#4c6674] pl-11 pr-[45px] text-[#f5f5f5]">
      <svg className="mt-[2px] h-[34px] w-[42px]" viewBox="0 0 42 34">
        <path d="M3.5 0H13V34H3.5Q0 34 0 30.5V19H4.5V24L11 17 4.5 10V15H0V3.5Q0 0 3.5 0Z" fill="#f5f5f5" />
        <path d="M15.5 0H38.5Q42 0 42 3.5V30.5Q42 34 38.5 34H15.5V30.5H38V4H15.5Z" fill="#f5f5f5" />
      </svg>
      <h3 className="ml-[42px] w-[266px] whitespace-nowrap text-[32px] font-semibold leading-[40px] tracking-[-0.1px]">10 Mainland Cities</h3>
      <svg className="ml-[16px] size-[30px]" viewBox="0 0 30 30">
        <path d="M15 0.5L18.4 11.2H29.5L20.6 17.9 24 28.8 15 22.2 6 28.8 9.4 17.9 0.5 11.2H11.6Z" fill="#788c96" stroke="#42596a" strokeWidth="1" />
      </svg>
      <svg className="ml-auto mt-[2px] h-[32px] w-[33px]" viewBox="0 0 33 32">
        <path d="M27 5.5L6 16 27 26.5" fill="none" stroke="#f5f5f5" strokeWidth="3.2" />
        <circle cx="27" cy="5.5" r="5.2" fill="#f5f5f5" />
        <circle cx="5.8" cy="16" r="5.6" fill="#f5f5f5" />
        <circle cx="27" cy="26.5" r="5.2" fill="#f5f5f5" />
      </svg>
      <svg className="ml-[60px] mt-[2px] h-[32px] w-[39px]" viewBox="0 0 39 32">
        <path d="M2 11V2H11M28 2H37V11M37 21V30H28M11 30H2V21" fill="none" stroke="#f5f5f5" strokeWidth="4" />
      </svg>
    </header>
  );
}

const GOOGLE: [string, string][] = [
  ['G', 'text-[#447de2]'], ['o', 'text-[#dc4a3d]'], ['o', 'text-[#e9b834]'],
  ['g', 'text-[#447de2]'], ['l', 'text-[#3aa757]'], ['e', 'text-[#dc4a3d]'],
];

function MapPanel() {
  return (
    <section className="flex h-[1250px] w-[906px] flex-col font-['Roboto',sans-serif]">
      <MapHeader />
      <div className="relative flex-1 overflow-hidden">
        <Terrain />
        {UNDER.map((p) => (
          <Label key={p.lines.join()} p={p} />
        ))}
        {MARKERS.map(([x, y]) => (
          <Marker key={`${x}-${y}`} x={x} y={y} />
        ))}
        {CITIES.map((p) => (
          <Label key={p.lines.join()} p={p} />
        ))}

        <div className="absolute left-8 top-[992px] flex h-[118px] w-[58px] flex-col rounded-[4px] bg-[#f5f5f5] shadow-[0_3px_10px_rgba(0,0,0,0.35)]">
          <div className="flex flex-1 items-center justify-center border-b-2 border-[#d3d3d3]">
            <svg className="size-[22px]" viewBox="0 0 22 22">
              <path d="M11 0V22M0 11H22" stroke="#949494" strokeWidth="5.5" />
            </svg>
          </div>
          <div className="flex flex-1 items-center justify-center">
            <svg className="size-[22px]" viewBox="0 0 22 22">
              <path d="M0 11H22" stroke="#949494" strokeWidth="6" />
            </svg>
          </div>
        </div>

        <div className="absolute left-[343px] top-[1080px] flex items-baseline gap-[6px] whitespace-nowrap font-['Inter',sans-serif] text-[32px] leading-[40px] [-webkit-text-stroke:7px_rgba(235,243,248,0.6)] [paint-order:stroke_fill]">
          <span className="font-semibold tracking-[-2px]">
            {GOOGLE.map(([c, k], i) => (
              <span key={i} className={k}>
                {c}
              </span>
            ))}
          </span>
          <span className="text-[29px] font-medium tracking-[-1.5px] text-[#6b8496] [word-spacing:-5px]">My Maps</span>
        </div>

        <div className="absolute bottom-1 left-1 flex h-[24px] w-[704px] items-center whitespace-nowrap bg-[#f5f5f5]/80 pl-[12px] text-[24px] leading-[24px] text-[#6a6a6a]">
          <span>Map data ©2019 Google, INEGI</span>
          <span className="ml-[24px] text-[#4479e0]">Terms</span>
          <span className="ml-[24px] mt-[2px]">1,000 km</span>
          <span className="ml-[10px] mt-[6px] h-[12px] w-[123px] border-2 border-t-0 border-[#6a6a6a]" />
        </div>
      </div>
    </section>
  );
}

export default function App() {
  return (
    <div className="flex h-[1730px] w-[2880px] overflow-hidden bg-[#f5f5f5]">
      <Sidebar />
      <main className="flex flex-1 flex-col pl-28 pt-[189px]">
        <h2 className="flex h-[120px] gap-[22px] whitespace-nowrap text-[96px] font-medium leading-[120px] text-[#ec4133]">
          <span className="font-['Noto_Sans_CJK_SC',sans-serif] leading-[116px]">关于</span>
          <span className="font-['Inter',sans-serif] text-[97px] font-semibold tracking-[1px]">About</span>
        </h2>
        <div className="mt-[55px] h-5 w-[120px] rounded-lg bg-[#f70606]" />
        <div className="mt-10 flex">
          <Article />
          <MapPanel />
        </div>
      </main>
    </div>
  );
}
